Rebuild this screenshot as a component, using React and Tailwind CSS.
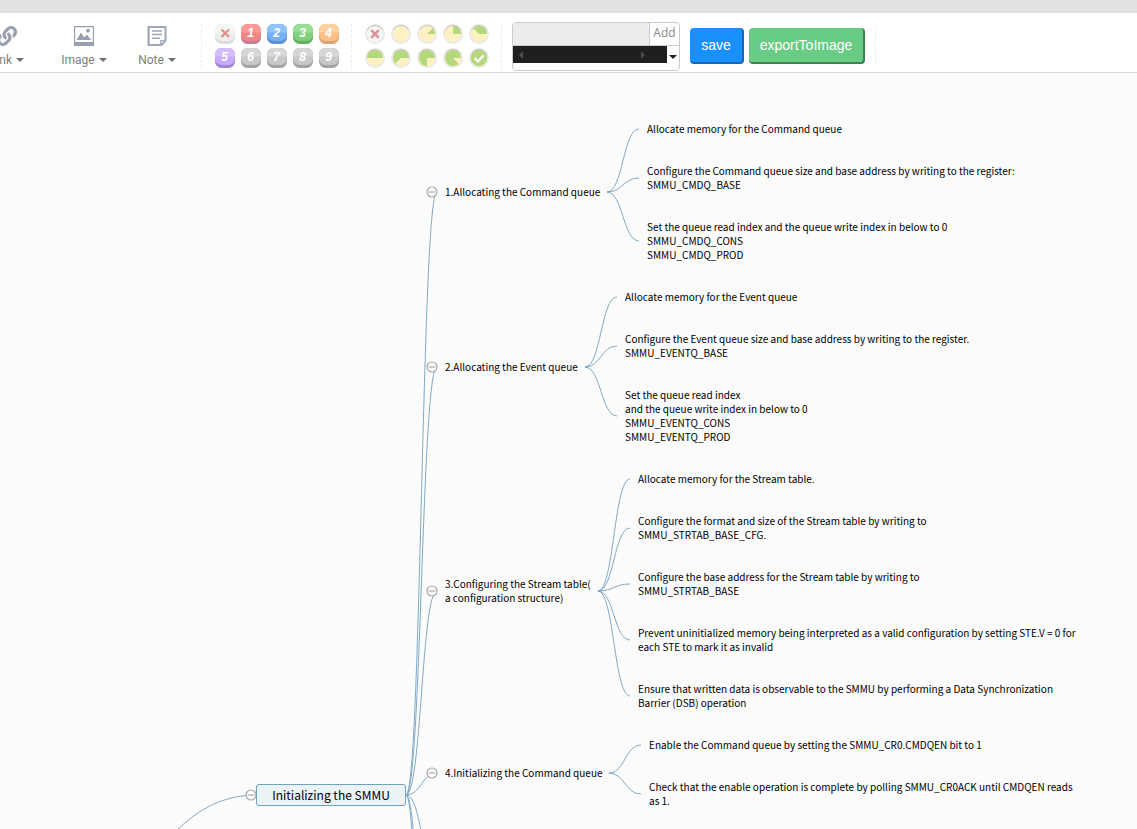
import { FaLink } from 'react-icons/fa';

const TOOLBAR_HEIGHT = 73;

const PRIORITIES = [
  { label: '1', top: '#ff9a96', face: '#f38583', edge: '#c47a92' },
  { label: '2', top: '#8fc3fb', face: '#76b0f6', edge: '#5a8fd6' },
  { label: '3', top: '#97dd96', face: '#7fd07e', edge: '#62b162' },
  { label: '4', top: '#ffcf9f', face: '#fbbe85', edge: '#dba674' },
  { label: '5', top: '#d5bcff', face: '#c7a9fb', edge: '#a083dd' },
  { label: '6', top: '#d6d6d6', face: '#c8c8c8', edge: '#a3a3a3' },
  { label: '7', top: '#d6d6d6', face: '#c8c8c8', edge: '#a3a3a3' },
  { label: '8', top: '#d6d6d6', face: '#c8c8c8', edge: '#a3a3a3' },
  { label: '9', top: '#d6d6d6', face: '#c8c8c8', edge: '#a3a3a3' },
];

const BRANCHES = [
  {
    x: 445, y: 192, forkX: 607, lines: ['1.Allocating the Command queue'],
    children: [
      { y: 129, lines: ['Allocate memory for the Command queue'] },
      { y: 178, lines: ['Configure the Command queue size and base address by writing to the register:', 'SMMU_CMDQ_BASE'] },
      { y: 241, lines: ['Set the queue read index and the queue write index in below to 0', 'SMMU_CMDQ_CONS', 'SMMU_CMDQ_PROD'] },
    ],
  },
  {
    x: 445, y: 367, forkX: 585, lines: ['2.Allocating the Event queue'],
    children: [
      { y: 297, lines: ['Allocate memory for the Event queue'] },
      { y: 346, lines: ['Configure the Event queue size and base address by writing to the register.', 'SMMU_EVENTQ_BASE'] },
      { y: 416, lines: ['Set the queue read index', 'and the queue write index in below to 0', 'SMMU_EVENTQ_CONS', 'SMMU_EVENTQ_PROD'] },
    ],
  },
  {
    x: 445, y: 591, forkX: 598, lines: ['3.Configuring the Stream table(', 'a configuration structure)'],
    children: [
      { y: 479, lines: ['Allocate memory for the Stream table.'] },
      { y: 528, lines: ['Configure the format and size of the Stream table by writing to', 'SMMU_STRTAB_BASE_CFG.'] },
      { y: 584, lines: ['Configure the base address for the Stream table by writing to', 'SMMU_STRTAB_BASE'] },
      { y: 640, lines: ['Prevent uninitialized memory being interpreted as a valid configuration by setting STE.V = 0 for', 'each STE to mark it as invalid'] },
      { y: 696, lines: ['Ensure that written data is observable to the SMMU by performing a Data Synchronization', 'Barrier (DSB) operation'] },
    ],
  },
  {
    x: 445, y: 773, forkX: 609, lines: ['4.Initializing the Command queue'],
    children: [
      { y: 745, lines: ['Enable the Command queue by setting the SMMU_CR0.CMDQEN bit to 1'] },
      { y: 794, lines: ['Check that the enable operation is complete by polling SMMU_CR0ACK until CMDQEN reads', 'as 1.'] },
    ],
  },
];

// Branches that continue below the visible part of the canvas.
const LOWER_BRANCHES = [870, 1180, 1420];

const ROOT = { x: 406, y: 795 };

function link(x1, y1, x2, y2) {
  const mid = (x1 + x2) / 2;
  return `M${x1} ${y1}C${mid} ${y1} ${mid} ${y2} ${x2} ${y2}`;
}

function Caret() {
  return (
    <svg className="h-1 w-2" viewBox="0 0 8 4" fill="#707070"><path d="M0 0h8L4 4z" /></svg>
  );
}

function ImageIcon() {
  return (
    <svg className="size-5" viewBox="0 0 20 20">
      <path fill="#989fb0" fillRule="evenodd" d="M0 0h20v20H0zM1.2 1.2v14.8h17.6V1.2z" />
      <path fill="#989fb0" d="M2.5 14 7 6.5l3.2 5 2.600-2.700L17.500 14z" />
      <circle cx="14" cy="4.700" r="1.900" fill="#989fb0" />
    </svg>
  );
}

function NoteIcon() {
  return (
    <svg className="size-5" viewBox="0 0 20 20" fill="none">
      <path fill="#a0a7b8" fillRule="evenodd" d="M.5 0h19v15l-5 5.500H.5zM2.700 2v16h10.500v-4h4.300V2z" />
      <path stroke="#a0a7b8" strokeWidth="1.400" d="M5 5h10M5 8.500h10M5 12.200h8" />
      <path fill="#fff" d="M14.500 17.300v-2.100h2.300z" />
    </svg>
  );
}

function MenuButton({ label, icon, className }) {
  return (
    <button type="button" className={`flex shrink-0 flex-col items-center text-xs leading-4 text-[#808080] ${className}`}>
      <span className="flex h-6 items-center justify-center">{icon}</span>
      <span className="mt-1 flex items-center gap-1">{label}<Caret /></span>
    </button>
  );
}

function Divider({ className = '' }) {
  return <div className={`shrink-0 border-l border-dashed border-[#ebebeb] ${className}`} />;
}

function PriorityButton({ item }) {
  return (
    <button type="button" aria-label={item ? `Priority ${item.label}` : 'Remove priority'} className="size-5">
      <svg viewBox="0 0 20 20" className="size-5">
        <rect width="20" height="20" rx="6.5" fill={item ? item.edge : '#dcdcdc'} />
        <rect width="20" height="17" rx="6.5" fill={item ? item.face : '#eeeeee'} />
        <path d="M0 8.5V6.5A6.5 6.5 0 0 1 6.5 0h7A6.5 6.5 0 0 1 20 6.5v2z" fill={item ? item.top : '#f5f5f5'} />
        {item ? (
          <text x="9.5" y="13" textAnchor="middle" fill="#fff" className="font-['Liberation_Sans',sans-serif] text-xs font-bold italic">{item.label}</text>
        ) : (
          <path d="m6.500 5.500 7.500 7.500m0-7.500-7.500 7.500" stroke="#de8f90" strokeWidth="2.2" />
        )}
      </svg>
    </button>
  );
}

// Filled sector for each eighth of progress; the full circle is drawn separately.
const PIES = [
  '',
  'M10 10H18A8 8 0 0 0 15.66 4.34Z',
  'M10 10V2A8 8 0 0 1 18 10Z',
  'M10 10H18A8 8 0 0 0 4.34 4.34Z',
  'M10 10H18A8 8 0 0 0 2 10Z',
  'M10 10H18A8 8 0 1 0 4.34 15.66Z',
  'M10 10H18A8 8 0 1 0 10 18Z',
  'M10 10H18A8 8 0 1 0 15.66 15.66Z',
];

function ProgressButton({ step }) {
  return (
    <button type="button" aria-label={step < 0 ? 'Remove progress' : `Progress ${step} of 8`} className="size-5">
      <svg viewBox="0 0 20 20" className="size-5">
        <circle cx="10" cy="10" r="9" fill="none" stroke="#e9e9e9" strokeWidth="2" />
        <circle cx="10" cy="10" r="8.2" fill={step < 0 ? '#f5f5f5' : step === 8 ? '#b4d97c' : '#fff1c1'} />
        {step > 0 && step < 8 && <path d={PIES[step]} fill="#b4d97c" />}
        <path d="M2.5 6.3A8.3 8.3 0 0 1 17.5 6.3" fill="none" stroke="#c4c4b8" strokeWidth="1" />
        {step < 0 && <path d="m6.2 6.2 7.6 7.6m0-7.6-7.6 7.6" stroke="#de8f90" strokeWidth="2.4" />}
        {step === 8 && <path d="m5.5 10 3.4 3.4 5.900-6" fill="none" stroke="#fff" strokeWidth="2.4" />}
      </svg>
    </button>
  );
}

function Toolbar() {
  return (
    <header className="h-[73px] shrink-0 overflow-hidden border-b border-[#d9d9d9] bg-white font-[Roboto,sans-serif]">
      <div className="h-[13px] bg-[#e1e1e1]" />
      <div className="flex h-[59px] items-start">
        <MenuButton label="Link" icon={<FaLink className="size-5 text-[#989fb0]" />} className="-ml-8 mt-[11px] w-[78px]" />
        <MenuButton label="Image" icon={<ImageIcon />} className="mt-[11px] w-[76px]" />
        <MenuButton label="Note" icon={<NoteIcon />} className="mt-[11px] w-[70px]" />
        <Divider className="ml-[9px] mt-[11px] h-11" />
        <div className="ml-[13px] mt-[11px] grid shrink-0 grid-cols-[repeat(5,20px)] gap-x-1.5 gap-y-1">
          <PriorityButton />
          {PRIORITIES.map((item) => <PriorityButton key={item.label} item={item} />)}
        </div>
        <Divider className="ml-3 mt-[11px] h-11" />
        <div className="ml-[13px] mt-[11px] grid shrink-0 grid-cols-[repeat(5,20px)] gap-x-1.5 gap-y-1">
          {[-1, 0, 1, 2, 3, 4, 5, 6, 7, 8].map((step) => <ProgressButton key={step} step={step} />)}
        </div>
        <Divider className="ml-3 mt-[11px] h-11" />
        <div className="ml-2.5 mt-[9px] h-[49px] w-[168px] shrink-0 overflow-hidden rounded border border-[#cbcbcb] bg-white">
          <div className="flex h-[23px] border-b border-[#cbcbcb]">
            <input type="text" aria-label="Resource" className="min-w-0 flex-1 bg-[#ececec] px-1 text-xs outline-none" />
            <button type="button" className="w-[30px] border-l border-[#cbcbcb] pb-0.5 font-['Open_Sans',sans-serif] text-xs leading-4 text-[#888888]">Add</button>
          </div>
          <div className="flex h-[17px] items-stretch">
            <div className="flex flex-1 items-center justify-between bg-[#1f1f1f] pl-1.5 pr-[22px]">
              <button type="button" aria-label="Scroll left"><svg className="h-2 w-1" viewBox="0 0 4 8" fill="#4d4d4d"><path d="M4 0v8L0 4z" /></svg></button>
              <button type="button" aria-label="Scroll right"><svg className="h-2 w-1" viewBox="0 0 4 8" fill="#4d4d4d"><path d="M0 0v8l4-4z" /></svg></button>
            </div>
            <button type="button" aria-label="More resources" className="flex w-3 items-center justify-center pt-1"><svg className="h-1 w-2" viewBox="0 0 8 4" fill="#222"><path d="M0 0h8L4 4z" /></svg></button>
          </div>
        </div>
        <button type="button" className="ml-2.5 mt-[15px] h-9 w-[54px] shrink-0 rounded border-b-2 border-r-2 border-[#1565b5] bg-[#1890ff] font-['Liberation_Sans',sans-serif] text-sm text-white">save</button>
        <button type="button" className="ml-[5px] mt-[15px] h-9 w-[116px] shrink-0 rounded border-b-2 border-r-2 border-[#3f8054] bg-[#68cc84] font-['Liberation_Sans',sans-serif] text-sm text-white">exportToImage</button>
        <Divider className="ml-2.5 mt-[15px] h-9" />
      </div>
    </header>
  );
}

function Collapse({ x, y }) {
  return (
    <g stroke="#a8a8a8" strokeWidth="1.2" fill="#fff">
      <circle cx={x} cy={y} r="5" />
      <path d={`M${x - 3.5} ${y}h7`} />
    </g>
  );
}

function NodeText({ x, y, lines }) {
  return (
    <div className="absolute -translate-y-1/2 whitespace-nowrap text-[10px] leading-[14px]" style={{ left: x, top: y - TOOLBAR_HEIGHT }}>
      {lines.map((line) => <div key={line}>{line}</div>)}
    </div>
  );
}

function MindMap() {
  return (
    <main className="relative flex-1 overflow-hidden bg-[#fbfbfb] font-['Noto_Sans_CJK_SC',sans-serif] text-black">
      <svg className="absolute inset-0 h-full w-full">
        <g transform={`translate(0 ${-TOOLBAR_HEIGHT})`}>
          <g fill="none" stroke="#73a1bf" strokeWidth="1" strokeOpacity="0.9">
            <path d="M170 837C196 810 220 797 251 795" />
            {BRANCHES.map((b) => <path key={b.y} d={link(ROOT.x, ROOT.y, 437, b.y)} />)}
            {LOWER_BRANCHES.map((y) => <path key={y} d={link(ROOT.x, ROOT.y, 437, y)} />)}
            {BRANCHES.map((b) => b.children.map((c) => (
              <path key={c.y} d={link(b.forkX, b.y, b.forkX + 32, c.y)} />
            )))}
          </g>
          <Collapse x={251} y={795} />
          {BRANCHES.map((b) => <Collapse key={b.y} x={432} y={b.y} />)}
        </g>
      </svg>
      {BRANCHES.map((b) => (
        <div key={b.y}>
          <NodeText x={b.x} y={b.y} lines={b.lines} />
          {b.children.map((c) => <NodeText key={c.y} x={b.forkX + 40} y={c.y} lines={c.lines} />)}
        </div>
      ))}
      <div
        className="absolute flex h-[22px] w-[150px] -translate-y-1/2 items-center justify-center rounded-[3px] border border-[#73a1bf] bg-[#ecf3f6] text-xs"
        style={{ left: 256, top: ROOT.y - TOOLBAR_HEIGHT }}
      >
        Initializing the SMMU
      </div>
    </main>
  );
}

export default function App() {
  return (
    <div className="flex h-screen flex-col overflow-hidden">
      <Toolbar />
      <MindMap />
    </div>
  );
}
